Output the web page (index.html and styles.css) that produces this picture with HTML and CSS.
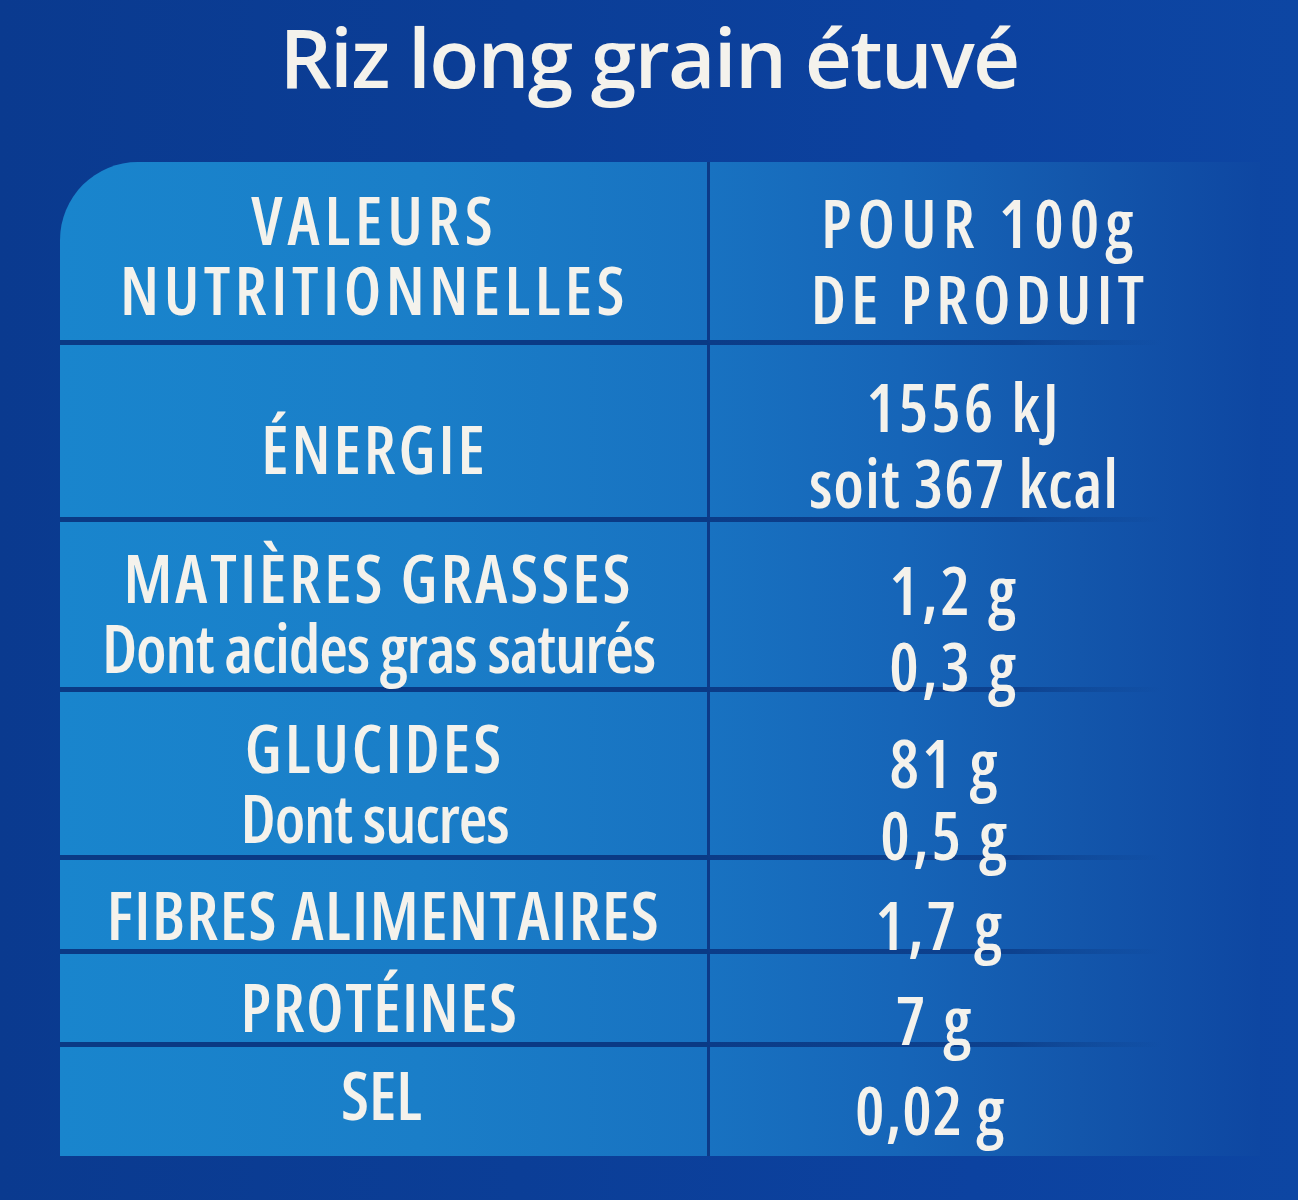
FILE: index.html
```html
<!DOCTYPE html>
<html lang="fr">
<head>
<meta charset="utf-8">
<title>Riz long grain étuvé</title>
<link rel="stylesheet" href="styles.css">
</head>
<body>
<div class="label">
  <h1 class="title">Riz long grain étuvé</h1>
  <div class="table">
    <div class="cell left p-head"><span class="ln ls5">VALEURS</span><span class="ln ls45">NUTRITIONNELLES</span></div>
    <div class="cell right r-head"><span class="ln ls6">POUR 100g</span><span class="ln ls5">DE PRODUIT</span></div>

    <div class="cell left p-energy"><span class="ln ls3">ÉNERGIE</span></div>
    <div class="cell right r-energy"><span class="ln ls3">1556 kJ</span><span class="ln ls1">soit 367 kcal</span></div>

    <div class="cell left p-fat"><span class="ln ls3">MATIÈRES GRASSES</span><span class="ln lc">Dont acides gras saturés</span></div>
    <div class="cell right r-fat"><span class="ln ls3">1,2 g</span><span class="ln ls3">0,3 g</span></div>

    <div class="cell left p-carbs"><span class="ln ls3">GLUCIDES</span><span class="ln lc">Dont sucres</span></div>
    <div class="cell right r-carbs"><span class="ln ls3">81 g</span><span class="ln ls3">0,5 g</span></div>

    <div class="cell left p-fibre"><span class="ln ls15">FIBRES ALIMENTAIRES</span></div>
    <div class="cell right r-fibre"><span class="ln ls3">1,7 g</span></div>

    <div class="cell left p-prot"><span class="ln ls15">PROTÉINES</span></div>
    <div class="cell right r-prot"><span class="ln ls3">7 g</span></div>

    <div class="cell left last p-salt"><span class="ln">SEL</span></div>
    <div class="cell right last r-salt"><span class="ln ls1">0,02 g</span></div>
  </div>
</div>
</body>
</html>
```
FILE: styles.css
```css
html, body {
  margin: 0;
  padding: 0;
}
body {
  width: 1298px;
  height: 1200px;
  overflow: hidden;
  background: linear-gradient(to right, #0a3a8f 0%, #0b3e97 40%, #0c42a0 75%, #0d46a3 100%);
  font-family: "Open Sans", "DejaVu Sans", sans-serif;
  font-stretch: 75%;
  font-weight: 600;
  color: #f4f2ec;
}
.label {
  display: flex;
  flex-direction: column;
  align-items: flex-start;
}
.title {
  align-self: stretch;
  margin: 0;
  height: 162px;
  padding-top: 11px;
  box-sizing: border-box;
  text-align: center;
  font-size: 82px;
  line-height: 90px;
  font-weight: 600;
  font-stretch: 100%;
  letter-spacing: -1.8px;
}
.table {
  margin-left: 60px;
  width: 1200px;
  display: grid;
  grid-template-columns: 650px 1fr;
  grid-template-rows: 183px 177px 170px 168px 94px 93px 109px;
  border-top-left-radius: 78px;
  background: linear-gradient(to right, #1985cd 0%, #1a7ec8 30%, #1872c1 54%, #1665b8 70%, #1356ab 85%, #0e47a2 100%);
  overflow: hidden;
}
.cell {
  box-sizing: border-box;
  display: flex;
  flex-direction: column;
  align-items: center;
  font-size: 66px;
  line-height: 70px;
  white-space: nowrap;
  border-bottom: 5px solid #0a3a85;
}
.ln {
  display: block;
  height: 70px;
}
.right .ln {
  height: 76px;
}
.r-carbs .ln {
  height: 72px;
}
.ls1 { letter-spacing: 1px; }
.ls15 { letter-spacing: 1.5px; }
.ls3 { letter-spacing: 3px; }
.ls45 { letter-spacing: 4.5px; }
.ls5 { letter-spacing: 5px; }
.ls6 { letter-spacing: 6px; }
.lc {
  letter-spacing: -1.2px;
}
.left {
  border-right: 3px solid #0c3a87;
  padding-right: 18px;
}
.right {
  line-height: 76px;
  border-bottom: 5px solid;
  border-image: linear-gradient(to right, #0b3c88 0%, #0d418e 55%, rgba(13, 65, 142, 0) 82%) 1;
}
.last {
  border-bottom: none;
}
.right.last {
  border-image: none;
}
.p-head { padding-top: 22px; }
.r-head { padding-top: 22px; padding-right: 10px; }
.p-energy { padding-top: 68px; }
.r-energy { padding-top: 23px; padding-right: 42px; }
.p-fat { padding-top: 20px; padding-right: 10px; }
.r-fat { padding-top: 29px; padding-right: 62px; }
.p-carbs { padding-top: 20px; }
.r-carbs { padding-top: 34px; line-height: 72px; padding-right: 80px; }
.p-fibre { padding-top: 19px; padding-right: 0; }
.r-fibre { padding-top: 26px; padding-right: 90px; }
.p-prot { padding-top: 17px; padding-right: 8px; }
.r-prot { padding-top: 27px; padding-right: 100px; }
.p-salt { padding-top: 12px; padding-right: 4px; }
.r-salt { padding-top: 24px; padding-right: 110px; }
```
